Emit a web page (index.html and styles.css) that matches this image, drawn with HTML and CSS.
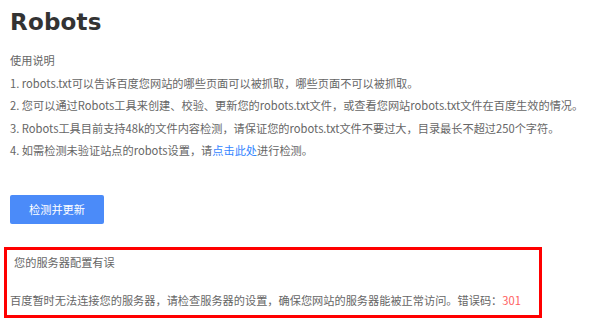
FILE: index.html
```html
<!DOCTYPE html>
<html lang="zh-CN">
<head>
<meta charset="utf-8">
<title>Robots</title>
<link rel="stylesheet" href="styles.css">
</head>
<body>
<div class="page">
  <h1 class="title">Robots</h1>
  <div class="intro">
    <p class="intro-head">使用说明</p>
    <ol class="intro-list">
      <li>1. robots.txt可以告诉百度您网站的哪些页面可以被抓取，哪些页面不可以被抓取。</li>
      <li>2. 您可以通过Robots工具来创建、校验、更新您的robots.txt文件，或查看您网站robots.txt文件在百度生效的情况。</li>
      <li>3. Robots工具目前支持48k的文件内容检测，请保证您的robots.txt文件不要过大，目录最长不超过250个字符。</li>
      <li>4. 如需检测未验证站点的robots设置，请<a class="link" href="#">点击此处</a>进行检测。</li>
    </ol>
  </div>
  <div class="actions">
    <button class="btn" type="button">检测并更新</button>
  </div>
  <div class="error-box">
    <div class="error-title">您的服务器配置有误</div>
    <div class="error-text">百度暂时无法连接您的服务器，请检查服务器的设置，确保您网站的服务器能被正常访问。错误码：<span class="code">301</span></div>
  </div>
</div>
</body>
</html>
```
FILE: styles.css
```css
html, body {
  margin: 0;
  padding: 0;
  background: #fff;
}
body {
  font-family: "Noto Sans CJK SC", "Noto Sans", sans-serif;
  font-size: 11.2px;
  color: #666;
}
.page {
  padding: 6px 10px 0 4px;
}
.title {
  margin: 0 0 0 6px;
  font-family: "DejaVu Sans", sans-serif;
  font-weight: bold;
  font-size: 23px;
  line-height: 32px;
  color: #333;
  letter-spacing: 0.2px;
}
.intro {
  margin: 11px 0 0 6px;
  white-space: nowrap;
}
.intro-head {
  margin: 0;
  line-height: 22.6px;
}
.intro-list {
  list-style: none;
  margin: 0;
  padding: 0;
}
.intro-list li {
  line-height: 22.6px;
}
.link {
  color: #3385ff;
  text-decoration: none;
}
.actions {
  margin: 33px 0 0 6px;
}
.btn {
  width: 94px;
  height: 29px;
  border: 0;
  border-radius: 2px;
  background: #4b8bf9;
  color: #fff;
  font-family: inherit;
  font-size: 11.2px;
  padding: 0;
}
.error-box {
  margin-top: 23px;
  width: 532px;
  height: 65px;
  border: 3px solid #f00;
  white-space: nowrap;
}
.error-title {
  padding: 3px 0 0 7px;
  line-height: 18px;
}
.error-text {
  padding: 20px 0 0 3px;
  line-height: 18px;
}
.code {
  color: #ff5f5f;
}
```
